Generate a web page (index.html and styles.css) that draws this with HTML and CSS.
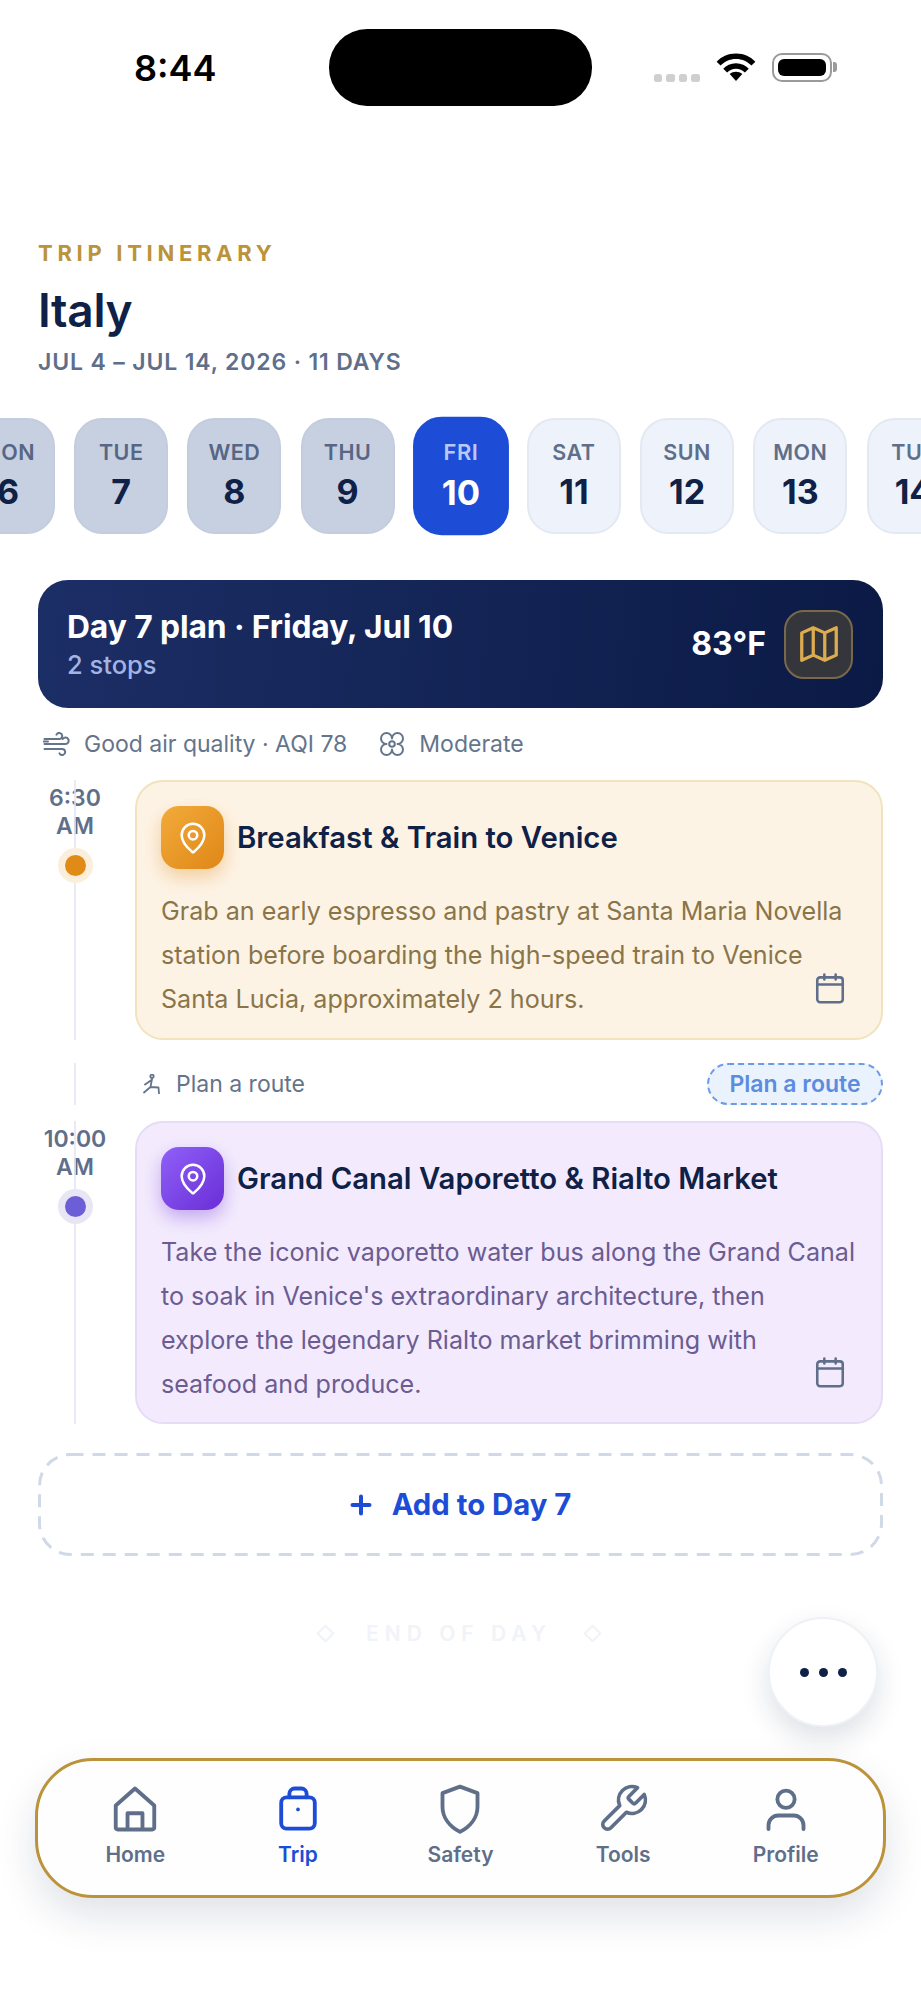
FILE: index.html
```html
<!DOCTYPE html>
<html lang="en">
<head>
<meta charset="utf-8">
<title>Trip Itinerary</title>
<link rel="stylesheet" href="styles.css">
</head>
<body>
<div class="phone">
  <div class="status">
    <div class="time">8:44</div>
    <div class="island"></div>
    <div class="sig"><i></i><i></i><i></i><i></i></div>
    <svg class="wifi" viewBox="0 0 40 30"><path d="M20 29 L13.5 21.8 C17 18.6 23 18.6 26.500 21.800 Z M20 10.500 C25.500 10.500 30 12.800 33.200 16.200 L29.200 20.200 C26.800 17.800 23.600 16.200 20 16.200 C16.400 16.200 13.200 17.800 10.800 20.200 L6.800 16.200 C10 12.800 14.500 10.500 20 10.500 Z M20 0.500 C28.500 0.500 35.200 3.900 40 9 L36 13 C32 9 26.500 6.200 20 6.200 C13.500 6.200 8 9 4 13 L0 9 C4.800 3.900 11.500 0.500 20 0.500 Z"/></svg>
    <div class="batt"><div class="batt-fill"></div></div>
    <div class="batt-nub"></div>
  </div>

  <header class="head">
    <div class="eyebrow">TRIP ITINERARY</div>
    <h1 class="title">Italy</h1>
    <div class="dates">JUL 4 – JUL 14, 2026 · 11 DAYS</div>
  </header>

  <div class="days">
    <div class="day past"><span class="dow">MON</span><span class="num">6</span></div>
    <div class="day past"><span class="dow">TUE</span><span class="num">7</span></div>
    <div class="day past"><span class="dow">WED</span><span class="num">8</span></div>
    <div class="day past"><span class="dow">THU</span><span class="num">9</span></div>
    <div class="day active"><span class="dow">FRI</span><span class="num">10</span></div>
    <div class="day"><span class="dow">SAT</span><span class="num">11</span></div>
    <div class="day"><span class="dow">SUN</span><span class="num">12</span></div>
    <div class="day"><span class="dow">MON</span><span class="num">13</span></div>
    <div class="day"><span class="dow">TUE</span><span class="num">14</span></div>
  </div>

  <section class="banner">
    <div class="banner-text">
      <div class="banner-title">Day 7 plan · Friday, Jul 10</div>
      <div class="banner-sub">2 stops</div>
    </div>
    <div class="temp">83°F</div>
    <div class="map-btn">
      <svg viewBox="0 0 24 24" class="map-ico"><path d="M3 6.200 L9 3.500 L15 6.200 L21 3.500 V17.800 L15 20.500 L9 17.800 L3 20.500 Z M9 3.500 V17.800 M15 6.200 V20.500"/></svg>
    </div>
  </section>

  <div class="info">
    <svg viewBox="0 0 28 24" class="wind"><path d="M1.500 7 H16 A3 3 0 1 0 13.500 2.600 M1.500 12 H22.500 A3.200 3.200 0 1 0 19.800 7 M1.500 17 H19 A3 3 0 1 1 16.500 21.400 M5 9.500 H0"/></svg>
    <span class="info-txt">Good air quality · AQI 78</span>
    <svg viewBox="0 0 26 26" class="clover"><circle cx="13" cy="13" r="2.800"/><path d="M13 7.500 A5.500 5.500 0 1 0 7.500 13 A5.500 5.500 0 1 0 13 18.500 A5.500 5.500 0 1 0 18.500 13 A5.500 5.500 0 1 0 13 7.500 Z"/></svg>
    <span class="info-txt">Moderate</span>
  </div>

  <div class="stop stop-one">
    <div class="rail">
      <div class="rail-line"></div>
      <div class="clock">6:30<br>AM</div>
      <div class="dot dot-amber"></div>
    </div>
    <article class="card card-amber">
      <div class="card-head">
        <div class="badge badge-amber"><svg viewBox="0 0 24 24" class="pin"><path d="M20 10c0 4.993-5.539 10.193-7.399 11.799a1 1 0 0 1-1.202 0C9.539 20.193 4 14.993 4 10a8 8 0 0 1 16 0"/><circle cx="12" cy="10" r="3"/></svg></div>
        <h2 class="card-title">Breakfast &amp; Train to Venice</h2>
      </div>
      <p class="card-text">Grab an early espresso and pastry at Santa Maria Novella station before boarding the high-speed train to Venice Santa Lucia, approximately 2 hours.</p>
      <svg viewBox="0 0 24 24" class="cal"><path d="M8 2.500v3.500M16 2.500v3.500"/><rect x="3" y="4.500" width="18" height="17.500" rx="2"/><path d="M3 9.500h18"/></svg>
    </article>
  </div>

  <div class="route">
    <div class="rail route-rail"><div class="rail-line"></div></div>
    <svg viewBox="0 0 18 20" class="walk"><circle cx="9" cy="2.300" r="1.700"/><path d="M9 5 L7.500 13 L15.500 13.500 L16 19.500 M7.500 13 L1 18.500 M8.500 6 L2 10.500"/></svg>
    <span class="route-txt">Plan a route</span>
    <div class="route-btn">Plan a route</div>
  </div>

  <div class="stop stop-two">
    <div class="rail">
      <div class="rail-line"></div>
      <div class="clock">10:00<br>AM</div>
      <div class="dot dot-violet"></div>
    </div>
    <article class="card card-violet">
      <div class="card-head">
        <div class="badge badge-violet"><svg viewBox="0 0 24 24" class="pin"><path d="M20 10c0 4.993-5.539 10.193-7.399 11.799a1 1 0 0 1-1.202 0C9.539 20.193 4 14.993 4 10a8 8 0 0 1 16 0"/><circle cx="12" cy="10" r="3"/></svg></div>
        <h2 class="card-title">Grand Canal Vaporetto &amp; Rialto Market</h2>
      </div>
      <p class="card-text">Take the iconic vaporetto water bus along the Grand Canal to soak in Venice's extraordinary architecture, then explore the legendary Rialto market brimming with seafood and produce.</p>
      <svg viewBox="0 0 24 24" class="cal"><path d="M8 2.500v3.500M16 2.500v3.500"/><rect x="3" y="4.500" width="18" height="17.500" rx="2"/><path d="M3 9.500h18"/></svg>
    </article>
  </div>

  <div class="add">
    <svg class="add-outline" viewBox="0 0 845 103"><rect x="1.500" y="1.500" width="842" height="100" rx="31"/></svg>
    <svg viewBox="0 0 22 22" class="plus"><path d="M11 2.500v17M2.500 11h17"/></svg>
    <span>Add to Day 7</span>
  </div>

  <div class="end">
    <span class="diamond"></span>
    <span class="end-txt">END OF DAY</span>
    <span class="diamond"></span>
  </div>

  <div class="fab"><i></i><i></i><i></i></div>

  <nav class="nav">
    <div class="tab">
      <svg viewBox="0 0 24 24" class="tab-ico"><path d="M3.750 10.500 L12 3.200 L20.250 10.500 V20 A.8 .8 0 0 1 19.450 20.800 H4.550 A.8 .8 0 0 1 3.750 20 Z M8.800 20.800 V13.800 H15.200 V20.800"/></svg>
      <span>Home</span>
    </div>
    <div class="tab tab-on">
      <svg viewBox="0 0 24 24" class="tab-ico"><rect x="4.800" y="7" width="14.400" height="13.400" rx="2.300"/><path d="M8.300 7 V5.500 A2.300 2.300 0 0 1 10.600 3.200 H13.400 A2.300 2.300 0 0 1 15.700 5.500 V7"/><circle class="fill" cx="12" cy="12.200" r=".8"/></svg>
      <span>Trip</span>
    </div>
    <div class="tab">
      <svg viewBox="0 0 24 24" class="tab-ico"><path d="M12 2.400 L19.500 5.200 V11 C19.500 15.800 16.200 19.600 12 21.800 C7.800 19.600 4.500 15.800 4.500 11 V5.200 Z"/></svg>
      <span>Safety</span>
    </div>
    <div class="tab">
      <svg viewBox="-.5 -.5 25 25" class="tab-ico"><path d="M14.700 6.300a1 1 0 0 0 0 1.400l1.600 1.600a1 1 0 0 0 1.400 0l3.770-3.770a6 6 0 0 1-7.940 7.940l-6.910 6.910a2.120 2.120 0 0 1-3-3l6.910-6.910a6 6 0 0 1 7.940-7.940l-3.760 3.760z"/></svg>
      <span>Tools</span>
    </div>
    <div class="tab">
      <svg viewBox="0 0 24 24" class="tab-ico"><circle cx="12" cy="7.800" r="3.700"/><path d="M4.500 20.600 V19 A4.200 4.200 0 0 1 8.700 14.800 H15.300 A4.200 4.200 0 0 1 19.500 19 V20.600"/></svg>
      <span>Profile</span>
    </div>
  </nav>
</div>
</body>
</html>
```

FILE: styles.css
```css
* { box-sizing: border-box; }
html, body { margin: 0; padding: 0; background: #fff; }
body { font-family: Inter, "Liberation Sans", sans-serif; color: #0f2147; }
.phone { position: relative; width: 921px; height: 2000px; overflow: hidden; background: #fff; }

.status { display: flex; align-items: flex-start; height: 106px; padding-top: 29px; }
.time { margin: 18px 0 0 134px; width: 194.500px; font-size: 36px; line-height: 42px; font-weight: 600; color: #000; }
.island { width: 263px; height: 77px; border-radius: 38px; background: #000; }
.sig { display: flex; gap: 4px; margin: 45px 0 0 62px; }
.sig i { display: block; width: 8.500px; height: 8px; border-radius: 2.500px; background: #cfcfcf; }
.wifi { width: 40px; height: 29px; margin: 24px 0 0 16px; fill: #000; }
.batt { width: 60px; height: 29px; margin: 24px 0 0 16px; padding: 4px; border: 2.500px solid #9a9a9a; border-radius: 10px; }
.batt-fill { width: 100%; height: 100%; background: #000; border-radius: 6px; }
.batt-nub { width: 4px; height: 10px; margin: 33px 0 0 1px; background: #9a9a9a; border-radius: 0 3px 3px 0; }

.head { padding: 134px 38px 0; }
.eyebrow { font-size: 22px; line-height: 26px; font-weight: 700; letter-spacing: 4.700px; color: #bb933a; }
.title { margin: 16px 0 0; font-size: 46px; line-height: 56px; font-weight: 600; color: #0f2147; letter-spacing: -.3px; }
.dates { margin-top: 10px; font-size: 23px; line-height: 28px; font-weight: 600; letter-spacing: .85px; color: #5f6f8a; }

.days { display: flex; gap: 19.200px; margin: 42px 0 0 -39px; width: 1100px; }
.day { flex: 0 0 94px; height: 116px; border-radius: 28px; border: 2px solid #e3e9f3; background: #edf2fb; display: flex; flex-direction: column; align-items: center; }
.dow { margin-top: 19px; font-size: 21.500px; line-height: 26px; font-weight: 600; letter-spacing: .5px; color: #5f6f8a; }
.num { margin-top: 7px; font-size: 34px; line-height: 40px; font-weight: 700; color: #0f2147; }
.day.past { background: #c6d0e0; border-color: #c3cdde; }
.day.past .dow { color: #566684; }
.day.active { background: #1d4dd6; border-color: #1d4dd6; transform: scale(1.02); }
.day.active .dow { color: #b9c9f5; }
.day.active .num { color: #fff; }

.banner { display: flex; align-items: center; margin: 46px 38px 0; height: 128px; padding: 0 30px 0 29px; border-radius: 30px; background: linear-gradient(95deg, #1c2e66 0%, #0b1a45 100%); }
.banner-text { flex: 1; }
.banner-title { font-size: 31.800px; line-height: 40px; font-weight: 700; color: #fff; letter-spacing: -.1px; }
.banner-sub { font-size: 25.500px; line-height: 32px; font-weight: 500; color: #a3b3e2; margin-top: 2px; }
.temp { font-size: 32px; line-height: 40px; font-weight: 700; color: #fff; margin-right: 18px; }
.map-btn { width: 69px; height: 69px; border-radius: 20px; border: 2px solid #79694a; background: #35353c; display: flex; align-items: center; justify-content: center; }
.map-ico { width: 46px; height: 46px; fill: none; stroke: #dcac4e; stroke-width: 1.700; stroke-linejoin: round; }

.info { display: flex; align-items: center; height: 36px; margin: 18px 0 0 43px; color: #64748b; }
.info-txt { font-size: 23px; line-height: 30px; }
.wind { width: 28px; height: 24px; margin-right: 13px; fill: none; stroke: #64748b; stroke-width: 2; stroke-linecap: round; }
.clover { width: 26px; height: 26px; margin: 0 14px 0 32px; fill: none; stroke: #64748b; stroke-width: 2; stroke-linejoin: round; }

.stop { display: flex; position: relative; padding-right: 38px; }
.stop-one { margin-top: 18px; }
.stop-two { margin-top: 16px; }
.rail { position: relative; width: 135px; flex: none; }
.rail-line { position: absolute; left: 74px; top: 0; bottom: 0; width: 2px; background: #e2e6f3; opacity: .8; z-index: 1; }
.clock { width: 150px; text-align: center; font-size: 23px; line-height: 28px; font-weight: 600; color: #5f6f8a; padding-top: 4px; }
.dot { position: relative; z-index: 2; width: 21px; height: 21px; border-radius: 50%; margin: 15px 0 0 65px; }
.dot-amber { background: #e08a18; box-shadow: 0 0 0 7px #fbeedc; }
.dot-violet { background: #6c5ed6; box-shadow: 0 0 0 7px #e8e6f5; }

.card { position: relative; flex: 1; border-radius: 28px; border: 2px solid; padding: 24px 24px 20px; }
.card-amber { background: #fdf3e5; border-color: #f1e3be; height: 260px; }
.card-violet { background: #f3ebfd; border-color: #e6dcf6; height: 303px; }
.card-head { display: flex; align-items: center; gap: 13px; }
.badge { width: 63px; height: 63px; flex: none; border-radius: 18px; display: flex; align-items: center; justify-content: center; }
.badge-amber { background: linear-gradient(135deg, #f2ab3a, #df8717); box-shadow: 0 8px 18px rgba(224,138,24,.35); }
.badge-violet { background: linear-gradient(135deg, #8f60f8, #6a2ed6); box-shadow: 0 8px 18px rgba(109,47,216,.35); }
.pin { width: 34px; height: 34px; fill: none; stroke: #fff; stroke-width: 1.800; }
.card-title { margin: 0; font-size: 29.300px; line-height: 36px; font-weight: 600; color: #0f2147; }
.card-text { margin: 20px 0 0; font-size: 25.100px; line-height: 44px; }
.card-amber .card-text { color: #8a7549; }
.card-violet .card-text { color: #6b5c92; }
.cal { position: absolute; right: 34px; bottom: 33px; width: 34px; height: 34px; fill: none; stroke: #5f6f8a; stroke-width: 1.800; stroke-linecap: round; }

.route { display: flex; align-items: center; height: 42px; margin: 23px 38px 0 0; position: relative; }
.route-rail { align-self: stretch; }
.walk { width: 18px; height: 20px; margin-left: 8px; fill: none; stroke: #64748b; stroke-width: 1.800; stroke-linecap: round; stroke-linejoin: round; }
.route-txt { flex: 1; margin-left: 15px; font-size: 23px; line-height: 28px; color: #64748b; }
.route-btn { width: 176px; height: 42px; border: 2px dashed #6a9ae8; border-radius: 21px; background: #eaf2fd; color: #5a8ce0; font-size: 23px; line-height: 38px; font-weight: 600; text-align: center; }

.add { position: relative; display: flex; align-items: center; justify-content: center; gap: 20px; height: 103px; margin: 29px 38px 0; color: #1d4dd6; font-size: 29.300px; font-weight: 700; }
.add-outline { position: absolute; left: 0; top: 0; width: 845px; height: 103px; fill: none; stroke: #d0d9e7; stroke-width: 3; stroke-dasharray: 13 9; }
.plus { width: 22px; height: 22px; fill: none; stroke: #1d4dd6; stroke-width: 4; stroke-linecap: round; }

.end { display: flex; align-items: center; justify-content: center; gap: 34px; height: 30px; margin-top: 62px; padding-right: 3px; }
.end-txt { font-size: 21px; font-weight: 600; letter-spacing: 6px; color: #f0f3f8; }
.diamond { width: 13px; height: 13px; transform: rotate(45deg); border: 2px solid #f0f3f8; }

.fab { position: absolute; left: 768px; top: 1617px; width: 110px; height: 110px; border-radius: 50%; background: #fff; border: 2px solid #eef1f6; box-shadow: 0 12px 28px rgba(15,33,71,.14); display: flex; align-items: center; justify-content: center; gap: 10px; }
.fab i { display: block; width: 9px; height: 9px; border-radius: 50%; background: #0f2147; }

.nav { position: absolute; left: 35px; top: 1758px; width: 851px; height: 140px; border: 3px solid #bb933a; border-radius: 58px; background: #fefefe; box-shadow: 0 18px 40px rgba(15,33,71,.13); display: flex; padding: 20px 16px 0; }
.tab { flex: 1; display: flex; flex-direction: column; align-items: center; color: #5f6f8a; font-size: 21px; line-height: 26px; font-weight: 600; }
.tab-ico { width: 56px; height: 56px; fill: none; stroke: currentColor; stroke-width: 1.650; stroke-linejoin: round; stroke-linecap: round; margin-bottom: 5px; }
.tab-ico .fill { fill: currentColor; stroke: none; }
.tab-on { color: #1d4dd6; }
```
